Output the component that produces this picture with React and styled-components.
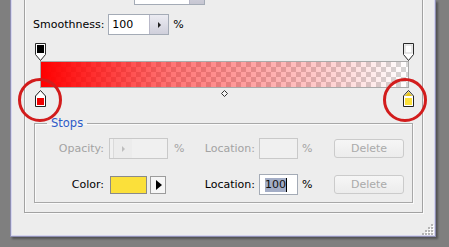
import React from 'react';
import styled, { createGlobalStyle } from 'styled-components';

const GlobalStyle = createGlobalStyle`
    body {
        margin: 0;
        background: #7f7f7f;
        font-family: 'DejaVu Sans', Verdana, sans-serif;
        font-size: 11px;
        color: #000;
    }
`;

const Page = styled.div`
    position: relative;
    width: 449px;
    height: 247px;
    background: #7f7f7f;
    overflow: hidden;
`;

const Window = styled.div`
    margin-left: 10px;
    width: 426px;
    height: 237px;
    box-sizing: border-box;
    display: flex;
    flex-direction: column;
    padding: 0 12px 0 13px;
    background: #ededed;
    border: 1px solid #8e8eb2;
    border-top: none;
    box-shadow: inset 1px 0 #d6d6ee, inset -1px -1px #d6d6ee, 2px 2px 2px rgba(0, 0, 0, 0.35);
`;

const Group = styled.div`
    margin-top: -20px;
    padding: 2px 0 9px 0;
    border: 1px solid #a2a2a2;
    box-shadow: inset 1px 1px #fafafa, 1px 1px #fafafa;
    display: flex;
    flex-direction: column;
`;

const FormRow = styled.div`
    display: flex;
    align-items: center;
    height: ${p => p.h || 21}px;
    margin-top: ${p => p.mt || 0}px;
    padding-left: 8px;
    gap: ${p => p.gap || 5}px;
`;

const Label = styled.span`
    color: ${p => (p.disabled ? '#a3a3a3' : '#000')};
    white-space: nowrap;
`;

const Dropdown = styled.div`
    width: 71px;
    height: 22px;
    box-sizing: border-box;
    margin-left: 16px;
    border: 1px solid #a4abb6;
    background: #fff;
    display: flex;
    justify-content: flex-end;
`;

const DropButton = styled.div`
    width: 14px;
    background: linear-gradient(#e2e2ea, #c6c6d2);
    border-left: 1px solid #b6b6c6;
`;

const NumberField = styled.div`
    width: ${p => p.w}px;
    height: 21px;
    box-sizing: border-box;
    border: 1px solid ${p => (p.disabled ? '#c9c9c9' : '#a4abb6')};
    background: ${p => (p.disabled ? '#f0f0f0' : '#fff')};
    display: flex;
    align-items: center;
    justify-content: space-between;
    padding-left: 3px;
`;

const Spin = styled.div`
    width: 19px;
    height: 100%;
    box-sizing: border-box;
    border-left: 1px solid ${p => (p.disabled ? '#dadada' : '#b9b9c9')};
    background: ${p => (p.disabled ? '#ececec' : 'linear-gradient(#ececf2, #cfcfdb)')};
    display: flex;
    align-items: center;
    justify-content: center;
    &::after {
        content: '';
        border-left: 3px solid ${p => (p.disabled ? '#bdbdbd' : '#222')};
        border-top: 3px solid transparent;
        border-bottom: 3px solid transparent;
    }
`;

const GradientArea = styled.div`
    margin: 8px 0 0 10px;
    width: 379px;
    display: flex;
    flex-direction: column;
`;

const StopRow = styled.div`
    display: flex;
    justify-content: space-between;
    align-items: flex-start;
    height: ${p => p.h}px;
    margin-top: ${p => p.mt || 0}px;
`;

const Bar = styled.div`
    margin: 0 5px;
    height: 27px;
    box-sizing: border-box;
    border: 1px solid #a9a9a9;
    background:
        linear-gradient(to right, rgba(255, 0, 0, 1) 0%, rgba(255, 0, 0, 0.55) 35%, rgba(255, 0, 0, 0) 100%),
        conic-gradient(#d6d6d6 25%, #ffffff 0 50%, #d6d6d6 0 75%, #ffffff 0) 0 0 / 10px 10px;
`;

const Stops = styled.fieldset`
    margin: 9px 0 0 9px;
    padding: 8px 0 7px 0;
    width: 379px;
    box-sizing: border-box;
    min-inline-size: 0;
    border: 1px solid #a8a8a8;
    box-shadow: inset 1px 1px #fafafa, 1px 1px #fafafa;
    display: flex;
    flex-direction: column;
    gap: 15px;
`;

const Legend = styled.legend`
    margin-left: 12px;
    padding: 0 4px;
    line-height: 14px;
    font-size: 11.5px;
    color: #2d5bc8;
`;

const StopsRow = styled.div`
    display: grid;
    grid-template-columns: 74px 60px 31px 59px 39px 36px 70px;
    align-items: center;
    height: 21px;
`;

const RightLabel = styled(Label)`
    text-align: right;
    padding-right: ${p => p.pr || 5}px;
`;

const Unit = styled(Label)`
    padding-left: ${p => p.pl || 5}px;
`;

const ColorPick = styled.div`
    display: flex;
    gap: 3px;
    padding-left: 1px;
`;

const Swatch = styled.div`
    width: 37px;
    height: 18px;
    box-sizing: border-box;
    border: 1px solid #8a8a8a;
    background: ${p => p.color};
`;

const ArrowButton = styled.div`
    width: 16px;
    height: 18px;
    box-sizing: border-box;
    border: 1px solid #9c9c9c;
    background: #f6f6f6;
    display: flex;
    align-items: center;
    justify-content: center;
    &::after {
        content: '';
        margin-left: 2px;
        border-left: 6px solid #000;
        border-top: 5px solid transparent;
        border-bottom: 5px solid transparent;
    }
`;

const TextBox = styled.div`
    width: 39px;
    height: 21px;
    box-sizing: border-box;
    border: 1px solid ${p => (p.disabled ? '#c9c9c9' : '#a4abb6')};
    background: ${p => (p.disabled ? '#f0f0f0' : '#fff')};
    display: flex;
    align-items: center;
    padding-left: 5px;
`;

const Selected = styled.span`
    background: #a3adc6;
    color: #111;
    line-height: 14px;
    border-right: 1px solid #000;
`;

const Button = styled.div`
    width: 70px;
    height: 19px;
    box-sizing: border-box;
    border: 1px solid #cbcbcb;
    border-radius: 3px;
    background: linear-gradient(#f6f6f6, #ececec);
    color: #aaaaaa;
    display: flex;
    align-items: center;
    justify-content: center;
`;

const Footer = styled.div`
    flex: 1;
    display: flex;
    justify-content: flex-end;
    align-items: flex-end;
    margin-right: -11px;
    padding-bottom: 1px;
`;

const Callout = styled.div`
    position: absolute;
    left: ${p => p.x}px;
    top: ${p => p.y}px;
    width: 44px;
    height: 44px;
    box-sizing: border-box;
    border: 3px solid #d21c1c;
    border-radius: 50%;
`;

const OpacityStop = ({ fill }) => (
    <svg width="11" height="18" viewBox="0 0 11 18">
        <path d="M0.5 0.5H10.5V11.5L5.5 17.5L0.5 11.5Z" fill="#fff" stroke="#2a2a2a" />
        <rect x="2" y="2" width="7" height="8" fill={fill} stroke={fill === '#fff' ? '#cfcfcf' : 'none'} />
    </svg>
);

const ColorStop = ({ fill, selected }) => (
    <svg width="11" height="17" viewBox="0 0 11 17">
        <path d="M5.5 0.5L10.5 6V16.5H0.5V6Z" fill="#fff" stroke="#222" />
        {selected && <path d="M5.5 1.8L9.3 6H1.7Z" fill="#e6c41c" />}
        <rect x="2" y="8" width="7" height="7" fill={fill} />
    </svg>
);

const Midpoint = () => (
    <svg width="7" height="7" viewBox="0 0 7 7" style={{ marginTop: 0 }}>
        <path d="M3.5 0.5L6.5 3.5L3.5 6.5L0.5 3.5Z" fill="#f4f4f4" stroke="#333" />
    </svg>
);

const Grip = () => (
    <svg width="12" height="12" viewBox="0 0 12 12">
        {[[9, 1], [6, 4], [9, 4], [3, 7], [6, 7], [9, 7], [0, 10], [3, 10], [6, 10], [9, 10]].map(([x, y]) => (
            <g key={`${x}-${y}`}>
                <rect x={x + 1} y={y + 1} width="2" height="2" fill="#ffffff" />
                <rect x={x} y={y} width="2" height="2" fill="#b5b5b5" />
            </g>
        ))}
    </svg>
);

const App = () => {
    return (<Page>
        <GlobalStyle />
        <Window>
            <Group>
                <FormRow h={22} gap={0} style={{ marginTop: 0 }}>
                    <Label>Gradient Type:</Label>
                    <Dropdown><DropButton /></Dropdown>
                </FormRow>
                <FormRow mt={9} gap={4}>
                    <Label>Smoothness:</Label>
                    <NumberField w={61}>100<Spin /></NumberField>
                    <Label>%</Label>
                </FormRow>
                <GradientArea>
                    <StopRow h={18}>
                        <OpacityStop fill="#000" />
                        <OpacityStop fill="#fff" />
                    </StopRow>
                    <Bar />
                    <StopRow h={17} mt={2}>
                        <ColorStop fill="#ee0000" />
                        <Midpoint />
                        <ColorStop fill="#fbe03a" selected />
                    </StopRow>
                </GradientArea>
                <Stops>
                    <Legend>Stops</Legend>
                    <StopsRow>
                        <RightLabel disabled>Opacity:</RightLabel>
                        <NumberField w={59} disabled><Spin disabled /></NumberField>
                        <Unit disabled>%</Unit>
                        <RightLabel disabled pr={4}>Location:</RightLabel>
                        <TextBox disabled />
                        <Unit disabled pl={4}>%</Unit>
                        <Button>Delete</Button>
                    </StopsRow>
                    <StopsRow>
                        <RightLabel>Color:</RightLabel>
                        <ColorPick>
                            <Swatch color="#fbe03a" />
                            <ArrowButton />
                        </ColorPick>
                        <Unit />
                        <RightLabel pr={4}>Location:</RightLabel>
                        <TextBox><Selected>100</Selected></TextBox>
                        <Unit pl={4}>%</Unit>
                        <Button>Delete</Button>
                    </StopsRow>
                </Stops>
            </Group>
            <Footer><Grip /></Footer>
        </Window>
        <Callout x={18} y={78} />
        <Callout x={383} y={78} />
    </Page>);
};

export default App;
